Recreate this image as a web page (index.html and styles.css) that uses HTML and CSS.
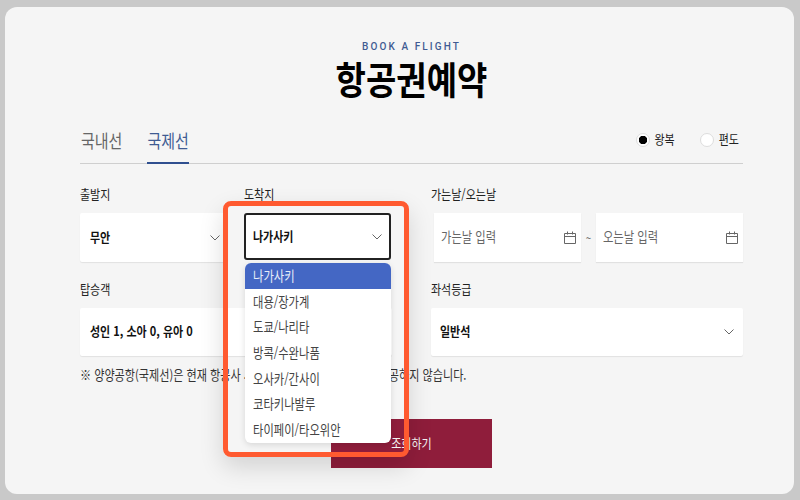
FILE: index.html
```html
<!DOCTYPE html>
<html lang="ko">
<head>
    <meta charset="UTF-8">
    <title>항공권예약</title>
    <link rel="stylesheet" href="styles.css">
</head>
<body>
    <div class="card">
        <div class="heading">
            <p class="eyebrow">BOOK A FLIGHT</p>
            <h1 class="title">항공권예약</h1>
        </div>

        <div class="tab-bar">
            <div class="tabs">
                <div class="tab"><span class="txt">국내선</span></div>
                <div class="tab tab-active"><span class="txt">국제선</span></div>
            </div>
            <div class="trip-types">
                <div class="trip"><i class="radio radio-on"></i><span class="txt">왕복</span></div>
                <div class="trip"><i class="radio"></i><span class="txt">편도</span></div>
            </div>
        </div>

        <div class="form-row">
            <div class="field field-from">
                <label class="field-label">출발지</label>
                <div class="select">
                    <span class="txt">무안</span>
                    <svg class="chevron" viewBox="0 0 10 6"><path d="M.5.5 5 5 9.500.5"/></svg>
                </div>
            </div>
            <div class="field field-to">
                <label class="field-label">도착지</label>
                <div class="select select-open">
                    <span class="txt">나가사키</span>
                    <svg class="chevron" viewBox="0 0 10 6"><path d="M.5.5 5 5 9.500.5"/></svg>
                </div>
                <ul class="dropdown">
                    <li class="option option-active"><span class="txt">나가사키</span></li>
                    <li class="option"><span class="txt">대용/장가계</span></li>
                    <li class="option"><span class="txt">도쿄/나리타</span></li>
                    <li class="option"><span class="txt">방콕/수완나품</span></li>
                    <li class="option"><span class="txt">오사카/간사이</span></li>
                    <li class="option"><span class="txt">코타키나발루</span></li>
                    <li class="option"><span class="txt">타이페이/타오위안</span></li>
                </ul>
            </div>
            <div class="field field-dates">
                <label class="field-label">가는날/오는날</label>
                <div class="date-pair">
                    <div class="date-input">
                        <span class="txt">가는날 입력</span>
                        <svg class="calendar" viewBox="0 0 12 13"><path d="M.5 2.500h11v10H.500zM.5 5.500h11M3.500.5v3M8.500.5v3"/></svg>
                    </div>
                    <span class="tilde">~</span>
                    <div class="date-input">
                        <span class="txt">오는날 입력</span>
                        <svg class="calendar" viewBox="0 0 12 13"><path d="M.5 2.500h11v10H.500zM.5 5.500h11M3.500.5v3M8.500.5v3"/></svg>
                    </div>
                </div>
            </div>
        </div>

        <div class="form-row form-row-second">
            <div class="field field-people">
                <label class="field-label">탑승객</label>
                <div class="select"><span class="txt">성인 1, 소아 0, 유아 0</span></div>
            </div>
            <div class="field field-seat">
                <label class="field-label">좌석등급</label>
                <div class="select">
                    <span class="txt">일반석</span>
                    <svg class="chevron" viewBox="0 0 10 6"><path d="M.5.5 5 5 9.500.5"/></svg>
                </div>
            </div>
        </div>

        <p class="note">※ 양양공항(국제선)은 현재 항공사 사정으로 인해 예약 서비스를 제공하지 않습니다.</p>

        <button class="search-btn" type="button"><span class="txt">조회하기</span></button>

        <div class="callout"></div>
    </div>
</body>
</html>
```

FILE: styles.css
```css
body {
    margin: 0;
    width: 800px;
    height: 500px;
    box-sizing: border-box;
    padding: 7px 6px 6px 5px;
    overflow: hidden;
    background: #c9c9c9;
    font-family: "Noto Sans CJK KR", "Noto Sans", sans-serif;
    color: #222;
}

.card {
    position: relative;
    height: 487px;
    box-sizing: border-box;
    padding: 34px 51px 0 75px;
    overflow: hidden;
    background: #f5f5f5;
    border-radius: 12px;
}

/* The lettering in this page runs narrow and tall */
.txt,
.eyebrow,
.field-label,
.note {
    transform: scaleY(1.18);
}

.txt {
    display: inline-block;
}

.trip .txt,
.select .txt,
.date-input .txt,
.search-btn .txt {
    transform: translateY(-1.500px) scaleY(1.18);
}

.eyebrow,
.field-label,
.note {
    transform: translateY(-1px) scaleY(1.18);
}

/* Heading */
.heading {
    text-align: center;
}

.eyebrow {
    margin: 0;
    font-family: Roboto, sans-serif;
    font-size: 10px;
    font-weight: 500;
    line-height: 12px;
    letter-spacing: 2.1px;
    color: #3f5b92;
}

.title {
    margin: 4px 0 0;
    font-size: 33px;
    font-weight: 700;
    line-height: 44px;
    color: #000;
    transform: translateY(-1.500px) scaleY(1.15);
}

/* Tabs */
.tab-bar {
    display: flex;
    justify-content: space-between;
    align-items: center;
    height: 41px;
    margin-top: 21px;
    border-bottom: 1px solid #cfcfcf;
}

.tabs {
    display: flex;
    gap: 25px;
    height: 100%;
    padding-left: 1px;
}

.tab {
    margin-bottom: -1px;
    font-size: 15px;
    line-height: 38px;
    color: #666;
}

.tab-active {
    color: #3f5b92;
    border-bottom: 2px solid #2f4f8f;
}

.trip-types {
    display: flex;
    gap: 25px;
    padding: 0 4px 5px 0;
    font-size: 11px;
    color: #222;
}

.trip {
    display: flex;
    align-items: center;
    gap: 5px;
}

.radio {
    display: block;
    width: 14px;
    height: 14px;
    box-sizing: border-box;
    background: #fff;
    border: 1px solid #ddd;
    border-radius: 50%;
}

.radio-on {
    background: radial-gradient(circle, #000 4px, #fff 4.500px);
}

/* Form */
.form-row {
    display: grid;
    grid-template-columns: 148px 148px 335px;
    column-gap: 16px;
    margin-top: 20px;
}

.form-row-second {
    margin-top: 17px;
}

.field {
    position: relative;
}

.field-dates,
.field-seat {
    margin-left: 23px;
}

.field-people {
    grid-column: span 2;
}

.field-label {
    display: block;
    height: 20px;
    margin-bottom: 9px;
    font-size: 11px;
    line-height: 20px;
}

.select {
    display: flex;
    justify-content: space-between;
    align-items: center;
    height: 49px;
    box-sizing: border-box;
    padding: 0 8px 0 10px;
    background: #fff;
    border-radius: 2px;
    box-shadow: 0 1px 1px rgba(0, 0, 0, 0.08);
    font-size: 11px;
    font-weight: 700;
    color: #111;
}

.form-row-second .select {
    height: 48px;
}

.field-seat .select {
    padding: 0 9px;
}

.select-open {
    height: 47px;
    margin: 1px 1px 0 0;
    padding: 0 7px;
    border: 2px solid #222;
    border-radius: 3px;
    box-shadow: none;
}

.chevron {
    width: 10px;
    height: 6px;
    fill: none;
    stroke: #666;
}

.date-pair {
    display: flex;
    align-items: center;
    margin-left: 3px;
}

.date-input {
    display: flex;
    justify-content: space-between;
    align-items: center;
    width: 148px;
    height: 49px;
    box-sizing: border-box;
    padding: 0 5px 0 7px;
    background: #fff;
    box-shadow: 0 1px 1px rgba(0, 0, 0, 0.08);
    font-size: 11.300px;
    color: #666;
}

.tilde {
    width: 15px;
    font-size: 10px;
    text-align: center;
    color: #555;
}

.calendar {
    width: 12px;
    height: 13px;
    fill: none;
    stroke: #666;
}

.note {
    margin: 10px 0 0;
    font-size: 11.100px;
    line-height: 18px;
    color: #333;
}

.search-btn {
    display: block;
    width: 161px;
    height: 49px;
    margin: 35px 0 0 251px;
    background: #8f1d3b;
    border: none;
    font-family: inherit;
    font-size: 11px;
    color: #f5f5f5;
}

/* Open list of the destination select */
.dropdown {
    position: absolute;
    z-index: 2;
    top: 79px;
    left: 1px;
    width: 146px;
    margin: 0;
    padding: 0;
    list-style: none;
    overflow: hidden;
    background: #fff;
    border-radius: 6px;
    box-shadow: 0 2px 6px rgba(0, 0, 0, 0.12);
}

.option {
    height: 25.700px;
    padding-left: 8px;
    font-size: 11.300px;
    line-height: 25px;
    color: #444;
}

.option-active {
    background: #4467c4;
    color: #e8edf8;
}

/* Orange highlight drawn over the screenshot */
.callout {
    position: absolute;
    z-index: 3;
    top: 194px;
    left: 218px;
    width: 186px;
    height: 256px;
    box-sizing: border-box;
    border: 5px solid #ff5a30;
    border-radius: 8px;
    box-shadow: 0 10px 24px rgba(0, 0, 0, 0.14);
}
```
